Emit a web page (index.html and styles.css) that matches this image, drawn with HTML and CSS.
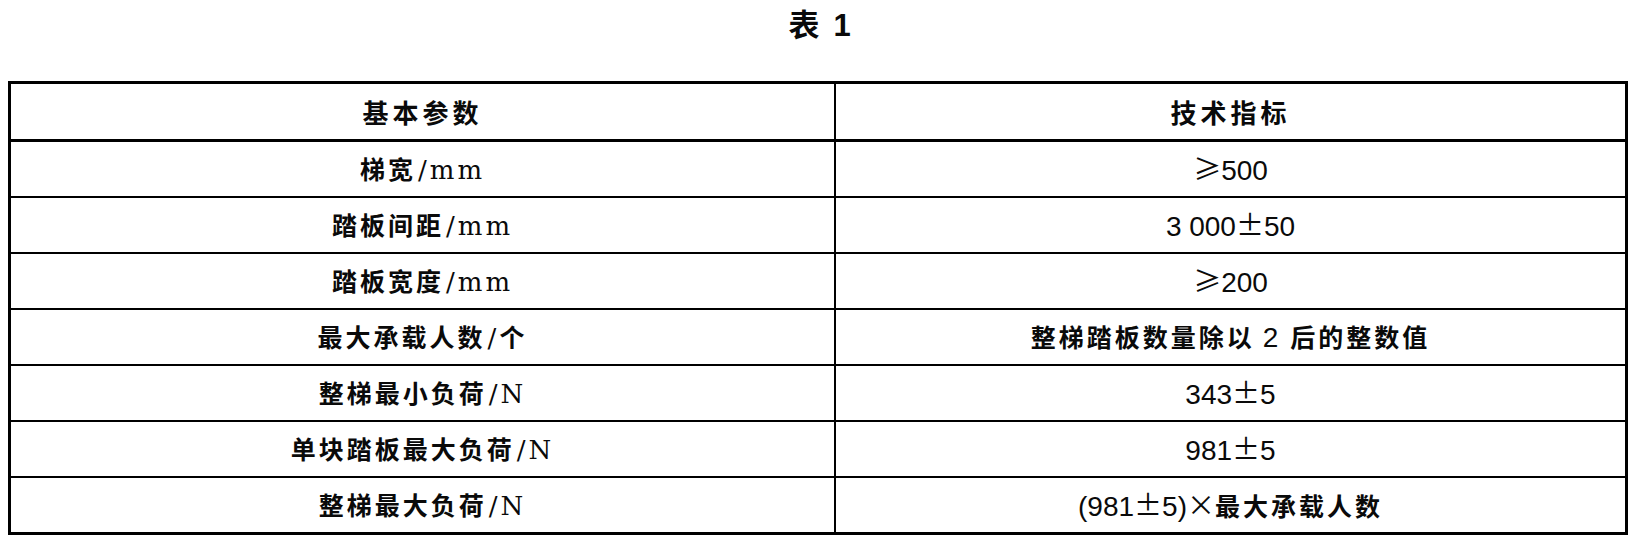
FILE: index.html
```html
<!DOCTYPE html>
<html lang="zh">
<head>
<meta charset="utf-8">
<title>表 1</title>
<link rel="stylesheet" href="styles.css">
</head>
<body>
<div class="page">
  <div class="title">表<span class="title-num">1</span></div>
  <table class="spec">
    <thead>
      <tr><th class="c1">基本参数</th><th class="c2">技术指标</th></tr>
    </thead>
    <tbody>
      <tr><td>梯宽<span class="lat">/mm</span></td><td><span class="sym">≥</span><span class="num">500</span></td></tr>
      <tr><td>踏板间距<span class="lat">/mm</span></td><td><span class="num">3 000</span><span class="sym">±</span><span class="num">50</span></td></tr>
      <tr><td>踏板宽度<span class="lat">/mm</span></td><td><span class="sym">≥</span><span class="num">200</span></td></tr>
      <tr><td>最大承载人数<span class="lat">/</span>个</td><td>整梯踏板数量除以<span class="num sp">2</span>后的整数值</td></tr>
      <tr><td>整梯最小负荷<span class="lat">/N</span></td><td><span class="num">343</span><span class="sym">±</span><span class="num">5</span></td></tr>
      <tr><td>单块踏板最大负荷<span class="lat">/N</span></td><td><span class="num">981</span><span class="sym">±</span><span class="num">5</span></td></tr>
      <tr><td>整梯最大负荷<span class="lat">/N</span></td><td><span class="num">(981</span><span class="sym">±</span><span class="num">5)</span><span class="sym">×</span>最大承载人数</td></tr>
    </tbody>
  </table>
</div>
</body>
</html>
```
FILE: styles.css
```css
html, body {
  margin: 0;
  padding: 0;
  background: #fff;
}
body {
  color: #0a0a0a;
  font-family: "Noto Sans CJK SC", "Liberation Sans", sans-serif;
}
.page {
  padding: 0 8px;
}
.title {
  height: 81px;
  text-align: center;
  font-size: 31px;
  font-weight: 700;
  line-height: 45px;
  padding-left: 3px;
}
.title-num {
  font-family: "Liberation Sans", sans-serif;
  margin-left: 14px;
}
.spec {
  width: 1620px;
  border-collapse: collapse;
  border: 3px solid #000;
  table-layout: fixed;
}
.spec .c1 { width: 823px; }
.spec th, .spec td {
  text-align: center;
  vertical-align: middle;
  padding: 0;
  line-height: 30px;
  font-weight: 700;
}
.spec th {
  height: 55px;
  border-top: 3px solid #000;
  border-bottom: 3px solid #000;
  border-right: 2px solid #000;
  font-size: 26px;
  letter-spacing: 4px;
}
.spec td {
  height: 54px;
  border-top: 2px solid #000;
  border-right: 2px solid #000;
  font-size: 25px;
  letter-spacing: 3px;
}
.lat {
  font-family: "DejaVu Serif", "Liberation Serif", serif;
  font-size: 26px;
  font-weight: 400;
  letter-spacing: 3px;
  margin-left: 2px;
}
.num {
  font-family: "Liberation Sans", sans-serif;
  font-size: 28px;
  font-weight: 400;
  letter-spacing: 0;
}
.num.sp {
  margin: 0 12px 0 8px;
}
.sym {
  display: inline-block;
  width: 28px;
  text-align: center;
  font-family: "Noto Sans CJK SC", "DejaVu Sans", sans-serif;
  font-size: 28px;
  font-weight: 400;
  letter-spacing: 0;
}
```
